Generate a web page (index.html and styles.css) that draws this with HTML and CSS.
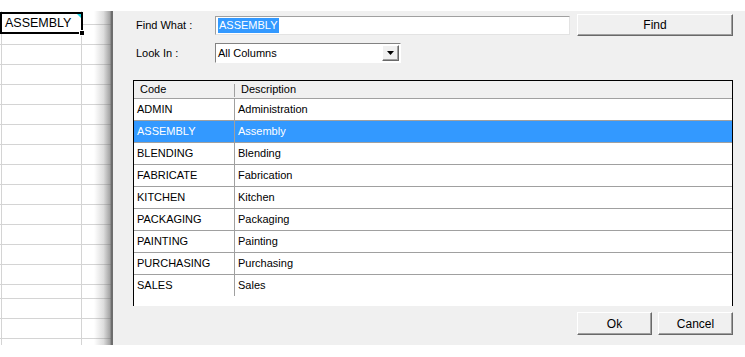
FILE: index.html
```html
<!DOCTYPE html>
<html lang="en">
<head>
    <meta charset="UTF-8">
    <title>Find</title>
    <link rel="stylesheet" href="styles.css">
</head>
<body>
    <div class="screen">
      <div class="sheet">
        <div class="sheet-row top"></div>
        <div class="sheet-row"></div>
        <div class="sheet-row"></div>
        <div class="sheet-row"></div>
        <div class="sheet-row"></div>
        <div class="sheet-row"></div>
        <div class="sheet-row"></div>
        <div class="sheet-row"></div>
        <div class="sheet-row"></div>
        <div class="sheet-row"></div>
        <div class="sheet-row"></div>
        <div class="sheet-row"></div>
        <div class="sheet-row"></div>
        <div class="sheet-row"></div>
        <div class="sheet-row short"></div>
        <div class="sheet-row"></div>
        <div class="sheet-row"></div>

        <div class="cell-edit">ASSEMBLY<span class="corner"></span><span class="handle"></span></div>
      </div>

      <div class="dialog">
        <div class="search">
          <label class="lbl">Find What :</label>
          <div class="field"><span class="picked">ASSEMBLY</span></div>
          <button class="btn find">Find</button>

          <label class="lbl">Look In :</label>
          <div class="field combo">
            <span>All Columns</span>
            <span class="drop">
              <svg width="7" height="4" viewBox="0 0 7 4"><path d="M0 0h7L3.5 4z" fill="#000"/></svg>
            </span>
          </div>
        </div>

        <div class="list">
          <div class="list-head">
            <span class="c1">Code</span>
            <span class="c2">Description</span>
          </div>
          <div class="item"><span class="c1">ADMIN</span><span class="c2">Administration</span></div>
          <div class="item active"><span class="c1">ASSEMBLY</span><span class="c2">Assembly</span></div>
          <div class="item"><span class="c1">BLENDING</span><span class="c2">Blending</span></div>
          <div class="item"><span class="c1">FABRICATE</span><span class="c2">Fabrication</span></div>
          <div class="item"><span class="c1">KITCHEN</span><span class="c2">Kitchen</span></div>
          <div class="item"><span class="c1">PACKAGING</span><span class="c2">Packaging</span></div>
          <div class="item"><span class="c1">PAINTING</span><span class="c2">Painting</span></div>
          <div class="item"><span class="c1">PURCHASING</span><span class="c2">Purchasing</span></div>
          <div class="item"><span class="c1">SALES</span><span class="c2">Sales</span></div>
        </div>

        <div class="actions">
          <button class="btn">Ok</button>
          <button class="btn">Cancel</button>
        </div>
      </div>
    </div>
</body>
</html>
```

FILE: styles.css
```css
body {
    margin: 0;
    background-color: #fff;
    font-family: 'Liberation Sans', Arial, sans-serif;
    font-size: 11px;
    color: #000;
}

.screen {
    display: flex;
    padding-top: 11px;
    height: 334px;
}

/* spreadsheet behind the dialog */
.sheet {
    width: 113px;
    flex-shrink: 0;
    position: relative;
    background:
        linear-gradient(#d4d4d4, #d4d4d4) 1px 0 / 1px 100% no-repeat,
        linear-gradient(#d4d4d4, #d4d4d4) 81px 0 / 1px 100% no-repeat;
}

.sheet::after {
    content: "";
    position: absolute;
    top: 0;
    bottom: 0;
    right: 0;
    width: 19px;
    background: linear-gradient(to right,
        rgba(255, 255, 255, 0),
        rgba(120, 120, 120, 0.25) 50%,
        rgba(100, 100, 100, 0.6) 85%,
        #6d6d6d 90%,
        #6d6d6d);
}

.sheet-row {
    box-sizing: border-box;
    height: 20px;
    border-bottom: 1px solid #d4d4d4;
}

.sheet-row.top {
    height: 14px;
}

.sheet-row.short {
    height: 14px;
}

.cell-edit {
    position: absolute;
    top: 1px;
    left: 0;
    width: 76px;
    height: 18px;
    border: 2px solid #000;
    background: #fff;
    font-size: 12.5px;
    line-height: 19px;
    padding-left: 3px;
}

.cell-edit .corner {
    position: absolute;
    top: 0;
    right: 0;
    width: 0;
    height: 0;
    border-top: 4px solid #18d8e8;
    border-left: 4px solid transparent;
}

.cell-edit .handle {
    position: absolute;
    right: -4px;
    bottom: -4px;
    width: 4px;
    height: 4px;
    background: #000;
    border: 1px solid #fff;
}

/* find dialog */
.dialog {
    flex: 1;
    background-color: #f0f0f0;
    padding: 3px 12px 10px 20px;
    display: flex;
    flex-direction: column;
}

.search {
    display: grid;
    grid-template-columns: 75px 355px 156px;
    grid-template-rows: 22px 20px;
    column-gap: 7px;
    row-gap: 7px;
    align-items: center;
}

.lbl {
    padding-left: 3px;
}

.field {
    box-sizing: border-box;
    height: 19px;
    background: #fff;
    border: 1px solid;
    border-color: #a0a0a0 #e3e3e3 #e3e3e3 #a0a0a0;
    display: flex;
    align-items: center;
    padding-left: 2px;
}

.picked {
    background-color: #3399ff;
    color: #fff;
    line-height: 15px;
    padding: 0 1px;
}

.combo {
    width: 186px;
    height: 20px;
    justify-content: space-between;
    padding-right: 1px;
    border-color: #828282 #fff #fff #828282;
}

.drop {
    box-sizing: border-box;
    width: 17px;
    height: 16px;
    background: #f0f0f0;
    border: 1px solid;
    border-color: #fff #696969 #696969 #fff;
    box-shadow: inset -1px -1px #a0a0a0;
    display: flex;
    align-items: center;
    justify-content: center;
}

.btn {
    box-sizing: border-box;
    height: 23px;
    background-color: #f0f0f0;
    border: 1px solid;
    border-color: #fff #696969 #696969 #fff;
    box-shadow: inset -1px -1px #a0a0a0;
    font-family: 'Liberation Sans', Arial, sans-serif;
    font-size: 12px;
    color: #000;
    padding: 0;
}

.btn.find {
    height: 22px;
}

.list {
    margin-top: 17px;
    height: 226px;
    box-sizing: border-box;
    border: 1px solid #000;
    border-bottom: none;
    background: #fff;
}

.list-head {
    display: flex;
    height: 18px;
    box-sizing: border-box;
    background: #f0f0f0;
    border-bottom: 1px solid #a0a0a0;
    line-height: 17px;
}

.list-head .c1 {
    width: 101px;
    box-sizing: border-box;
    padding-left: 6px;
    background: linear-gradient(#a0a0a0, #a0a0a0) right 3px / 1px 13px no-repeat;
}

.list-head .c2 {
    padding-left: 6px;
}

.item {
    display: flex;
    height: 22px;
    box-sizing: border-box;
    border-bottom: 1px solid #a0a0a0;
    line-height: 21px;
}

.item:last-child {
    height: 21px;
    border-bottom: none;
}

.item .c1 {
    width: 101px;
    box-sizing: border-box;
    padding-left: 3px;
    border-right: 1px solid #a0a0a0;
}

.item .c2 {
    padding-left: 3px;
}

.item.active {
    background-color: #3399ff;
    color: #fff;
}

.actions {
    margin-top: 6px;
    display: flex;
    justify-content: flex-end;
    gap: 6px;
}

.actions .btn {
    width: 75px;
}
```
